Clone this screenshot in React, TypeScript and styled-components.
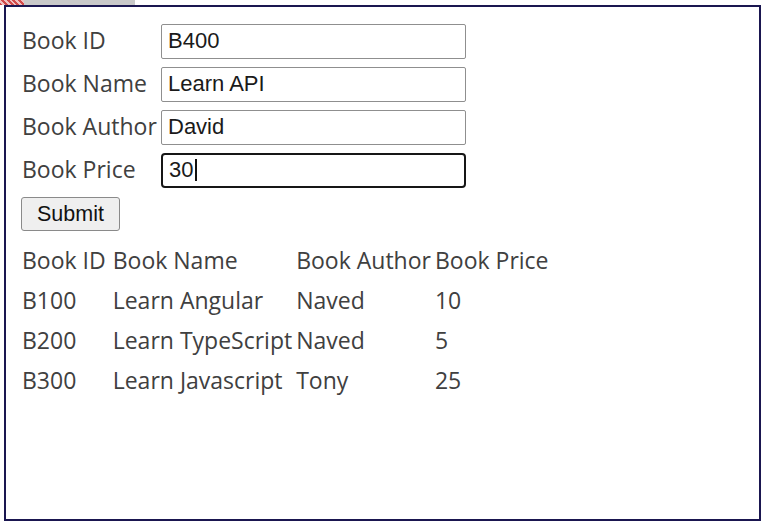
import styled, { createGlobalStyle } from "styled-components";

const GlobalStyle = createGlobalStyle`
  body {
    margin: 0;
    background: #ffffff;
  }
`;

const Page = styled.div`
  width: 764px;
  height: 527px;
  background: #ffffff;
`;

const TopStrip = styled.div`
  width: 135px;
  height: 5px;
  background: #c9c9c9;
  display: flex;
`;

const Squiggle = styled.div`
  width: 24px;
  height: 5px;
  background: repeating-linear-gradient(45deg, #d24a4a 0 2px, #f0c0c0 2px 4px);
`;

const Frame = styled.div`
  margin-left: 4px;
  width: 757px;
  height: 516px;
  box-sizing: border-box;
  border: 2px solid #1a1650;
  padding: 16px 16px;
  font-family: "Open Sans", "Noto Sans", sans-serif;
  font-size: 23px;
  color: #404040;
`;

const Form = styled.form`
  display: grid;
  grid-template-columns: 139px 305px;
  row-gap: 8px;
  align-items: center;
`;

const Label = styled.label`
  white-space: nowrap;
  line-height: 35px;
`;

const Field = styled.div`
  position: relative;
  height: 35px;
`;

type InputProps = {
  $active?: boolean;
};

const Input = styled.input<InputProps>`
  box-sizing: border-box;
  width: 305px;
  height: 35px;
  margin: 0;
  padding: 0 6px;
  font-family: "Liberation Sans", Arial, sans-serif;
  font-size: 22px;
  color: #1a1a1a;
  background: #ffffff;
  outline: none;
  border: ${(p) => (p.$active ? "2.5px solid #161616" : "1px solid #8f8f8f")};
  border-radius: ${(p) => (p.$active ? "4px" : "2px")};
`;

const Caret = styled.span`
  position: absolute;
  left: 34px;
  top: 7px;
  width: 1.5px;
  height: 22px;
  background: #111111;
  pointer-events: none;
`;

const SubmitButton = styled.button`
  margin-top: 10px;
  margin-left: -1px;
  width: 99px;
  height: 34px;
  box-sizing: border-box;
  padding: 0;
  font-family: "Liberation Sans", Arial, sans-serif;
  font-size: 21.5px;
  color: #111111;
  background: #efefef;
  border: 1px solid #8a8a8a;
  border-radius: 3px;
`;

const Table = styled.table`
  margin-top: 8px;
  margin-left: -3px;
  border-spacing: 2px;
  font-size: 23px;
  color: #404040;
`;

type CellProps = {
  $first?: boolean;
};

const Cell = styled.td<CellProps>`
  padding: 1px;
  padding-right: ${(p) => (p.$first ? "4px" : "1px")};
  line-height: 36px;
  white-space: nowrap;
  vertical-align: middle;
`;

const HeadCell = styled(Cell).attrs({ as: "th" })`
  font-weight: normal;
  text-align: left;
`;

type Book = {
  id: string;
  name: string;
  author: string;
  price: number;
};

const books: Book[] = [
  { id: "B100", name: "Learn Angular", author: "Naved", price: 10 },
  { id: "B200", name: "Learn TypeScript", author: "Naved", price: 5 },
  { id: "B300", name: "Learn Javascript", author: "Tony", price: 25 },
];

const fields = [
  { label: "Book ID", value: "B400" },
  { label: "Book Name", value: "Learn API" },
  { label: "Book Author", value: "David" },
  { label: "Book Price", value: "30", active: true },
];

export default function App() {
  return (
    <Page>
      <GlobalStyle />
      <TopStrip>
        <Squiggle />
      </TopStrip>
      <Frame>
        <Form onSubmit={(e) => e.preventDefault()}>
          {fields.map((f) => [
            <Label key={f.label + "-l"}>{f.label}</Label>,
            <Field key={f.label + "-f"}>
              <Input $active={f.active} defaultValue={f.value} />
              {f.active && <Caret />}
            </Field>,
          ])}
        </Form>
        <SubmitButton type="button">Submit</SubmitButton>
        <Table>
          <thead>
            <tr>
              <HeadCell $first>Book ID</HeadCell>
              <HeadCell>Book Name</HeadCell>
              <HeadCell>Book Author</HeadCell>
              <HeadCell>Book Price</HeadCell>
            </tr>
          </thead>
          <tbody>
            {books.map((b) => (
              <tr key={b.id}>
                <Cell $first>{b.id}</Cell>
                <Cell>{b.name}</Cell>
                <Cell>{b.author}</Cell>
                <Cell>{b.price}</Cell>
              </tr>
            ))}
          </tbody>
        </Table>
      </Frame>
    </Page>
  );
}
